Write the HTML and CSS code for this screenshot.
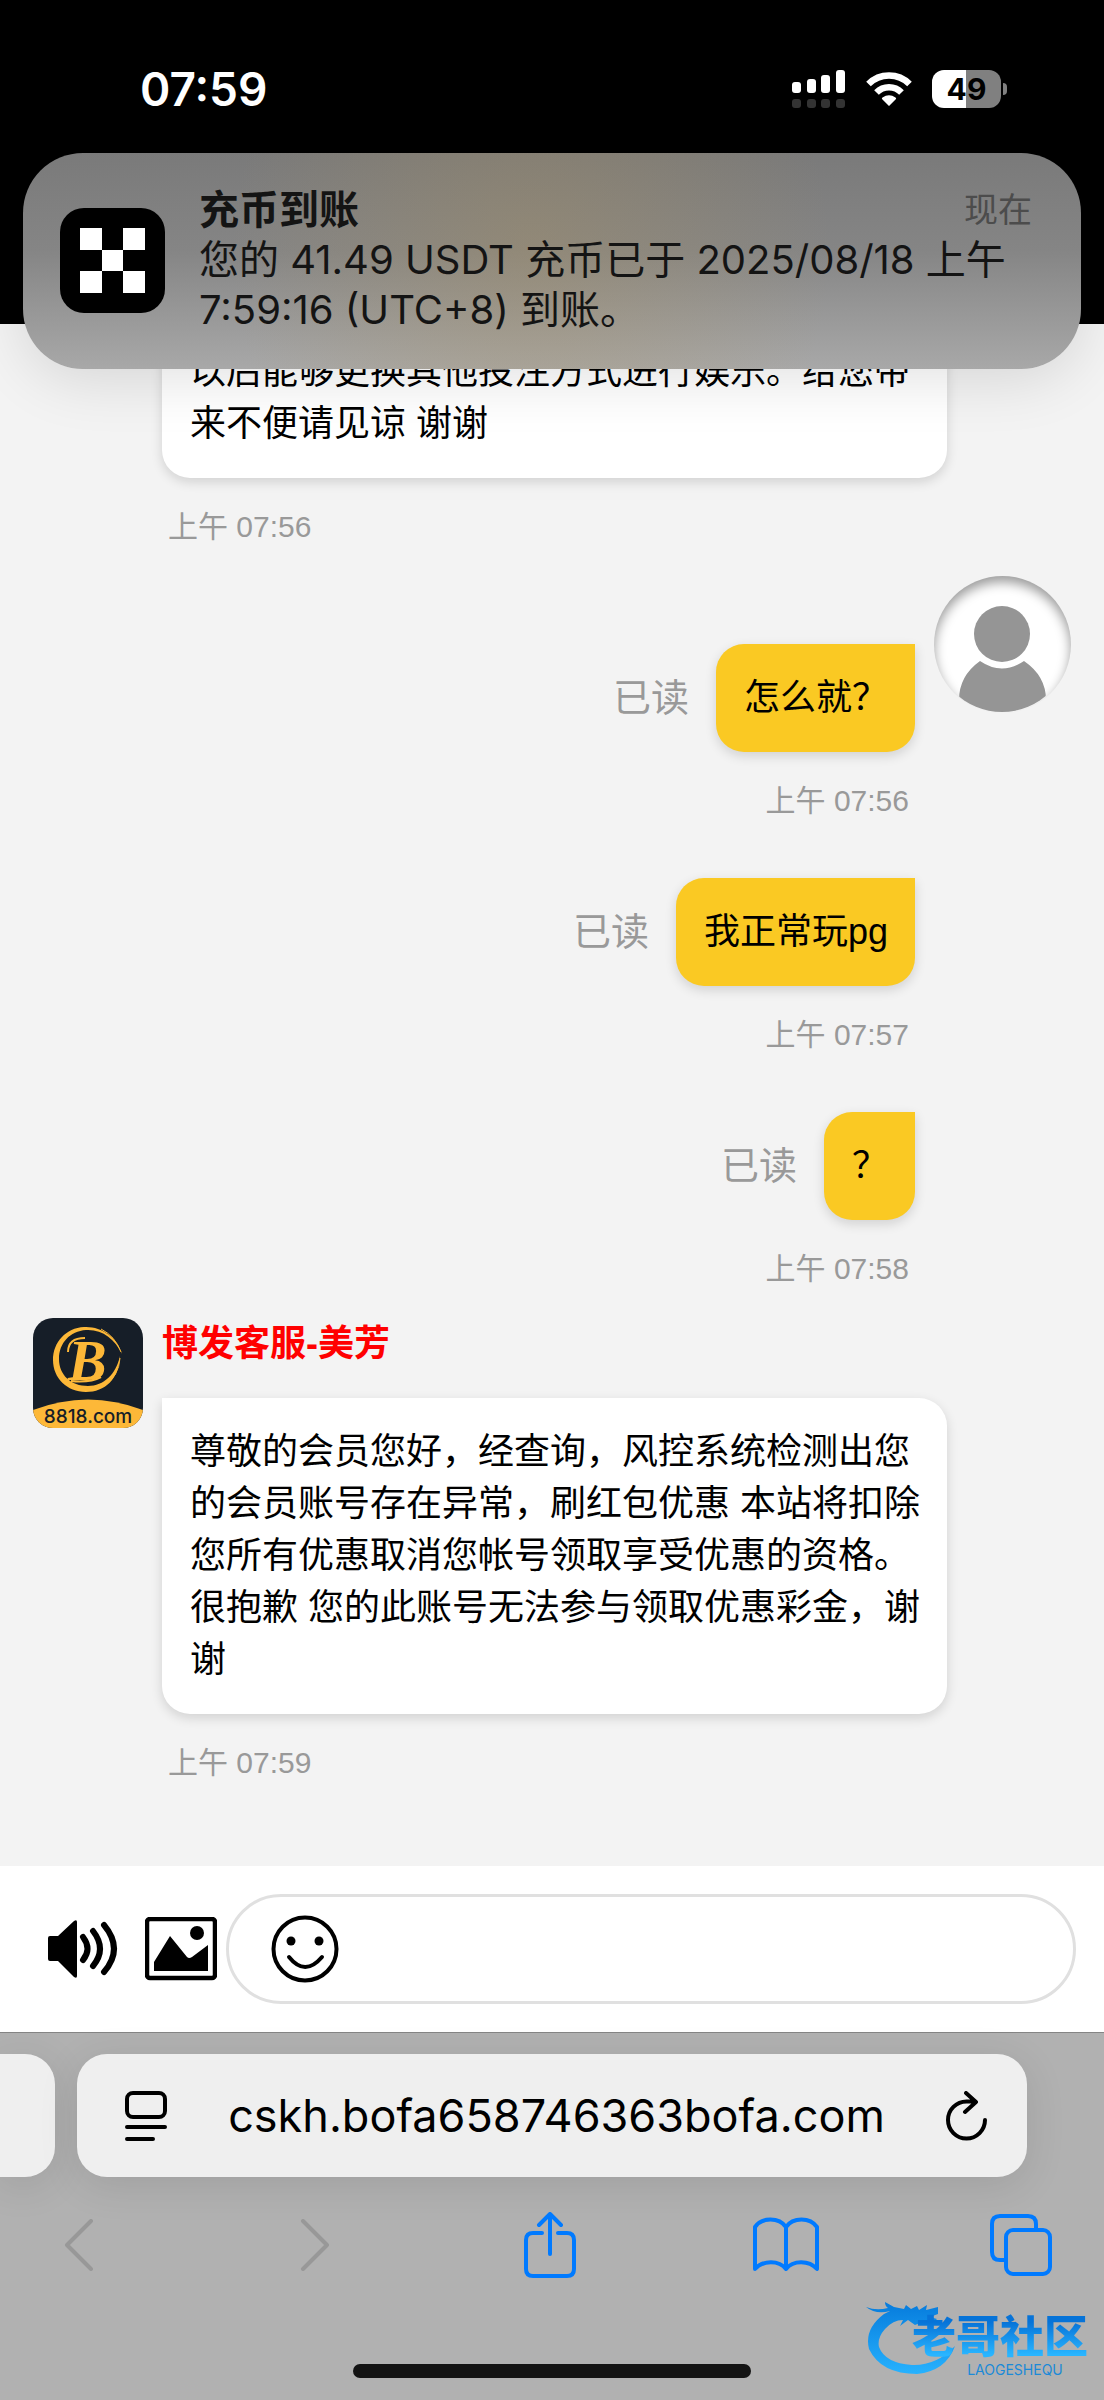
FILE: index.html
```html
<!DOCTYPE html>
<html lang="zh-CN">
<head>
    <meta charset="UTF-8">
    <meta name="viewport" content="width=device-width, initial-scale=1.0">
    <title>在线客服</title>
    <link rel="stylesheet" href="styles.css">
</head>
<body>
<div class="screen">

    <header class="status-bar">
        <span class="clock">07:59</span>
        <div class="status-icons">
            <svg width="54" height="38" viewBox="0 0 54 38" aria-hidden="true">
                <g fill="#fff">
                    <rect x="0" y="12" width="9" height="11" rx="3"/>
                    <rect x="15" y="9" width="9" height="14" rx="3"/>
                    <rect x="29" y="5" width="9" height="18" rx="3"/>
                    <rect x="44" y="0" width="9" height="23" rx="3"/>
                </g>
                <g fill="#333">
                    <rect x="0" y="29" width="9" height="9" rx="3"/>
                    <rect x="15" y="29" width="9" height="9" rx="3"/>
                    <rect x="29" y="29" width="9" height="9" rx="3"/>
                    <rect x="44" y="29" width="9" height="9" rx="3"/>
                </g>
            </svg>
            <svg width="46" height="36" viewBox="0 0 46 36" aria-hidden="true">
                <g fill="none" stroke="#fff" stroke-width="6.5">
                    <path d="M2.5 13A29 29 0 0 1 43.500 13"/>
                    <path d="M10.500 21.500A17.500 17.500 0 0 1 35.500 21.500"/>
                </g>
                <path d="M23 35L16 28Q15.500 27 16.500 26.500Q23 22 29.500 26.500Q30.500 27 30 28Z" fill="#fff"/>
            </svg>
            <div class="battery">49</div>
        </div>
    </header>

    <main class="chat">
        <article class="message theirs">
            <div class="message-body">
                <p class="bubble">以后能够更换其他投注方式进行娱乐。给您带来不便请见谅 谢谢</p>
                <time class="time">上午 07:56</time>
            </div>
        </article>

        <article class="message mine first">
            <div class="message-body">
                <div class="bubble-row">
                    <span class="read">已读</span>
                    <p class="bubble">怎么就？</p>
                </div>
                <time class="time">上午 07:56</time>
            </div>
            <svg class="user-avatar" viewBox="0 0 137 137" role="img" aria-label="用户">
                <defs>
                    <clipPath id="face"><circle cx="68" cy="68" r="68"/></clipPath>
                </defs>
                <g fill="#959595" clip-path="url(#face)">
                    <circle cx="68" cy="58" r="28"/>
                    <path d="M46 85Q68 100 90 85Q112 100 112 124V137H25V124Q25 100 46 85Z"/>
                </g>
            </svg>
        </article>

        <article class="message mine">
            <div class="message-body">
                <div class="bubble-row">
                    <span class="read">已读</span>
                    <p class="bubble">我正常玩pg</p>
                </div>
                <time class="time">上午 07:57</time>
            </div>
        </article>

        <article class="message mine">
            <div class="message-body">
                <div class="bubble-row">
                    <span class="read">已读</span>
                    <p class="bubble">？</p>
                </div>
                <time class="time">上午 07:58</time>
            </div>
        </article>

        <article class="message theirs">
            <svg class="agent-avatar" viewBox="0 0 110 110" role="img" aria-label="8818.com">
                <rect width="110" height="110" fill="#161e28"/>
                <path d="M0 92Q55 71 110 92V110H0Z" fill="#fdb838"/>
                <path d="M89 36C84 19 68 8 51 9C33 10 20 24 20 42C20 60 34 74 53 74C72 74 86 61 87 38C83 56 71 68 55 68C38 68 26 57 26 41C26 25 37 13 53 12C69 11 82 21 89 36Z" fill="#fdb838"/>
                <path d="M68 11Q82 18 88 34M87 40Q86 58 71 68" fill="none" stroke="#fdb838"/>
                <text class="logo-letter" x="35" y="62">B</text>
                <path d="M38 63Q57 65 68 59M35 34Q35 20 52 20" fill="none" stroke="#fdb838" stroke-width="2"/>
                <text class="logo-name" x="55" y="105">8818.com</text>
            </svg>
            <div class="message-body">
                <h2 class="agent-name">博发客服-美芳</h2>
                <p class="bubble">尊敬的会员您好，经查询，风控系统检测出您的会员账号存在异常，刷红包优惠 本站将扣除您所有优惠取消您帐号领取享受优惠的资格。很抱歉 您的此账号无法参与领取优惠彩金，谢谢</p>
                <time class="time">上午 07:59</time>
            </div>
        </article>
    </main>

    <form class="composer">
        <button type="button" class="icon-button sound" aria-label="声音">
            <svg width="70" height="58" viewBox="0 0 70 58">
                <path d="M0 18Q0 16 2 16H10L26 1Q29 -1 29 2V56Q29 59 26 57L10 41H2Q0 41 0 39Z"/>
                <g fill="none" stroke="#000" stroke-width="6" stroke-linecap="round">
                    <path d="M35 17Q44 29 35 40"/>
                    <path d="M45 11Q59 29 45 46"/>
                    <path d="M56 5Q76 29 56 52"/>
                </g>
            </svg>
        </button>
        <button type="button" class="icon-button" aria-label="图片">
            <svg width="72" height="64" viewBox="0 0 72 64">
                <rect x="2" y="2" width="68" height="59" rx="3" fill="none" stroke="#000" stroke-width="4.500"/>
                <circle cx="52" cy="16" r="7"/>
                <path d="M9 54V45L25 19L42 40Q44 42 47 40L63 28V54Z"/>
            </svg>
        </button>
        <div class="input-pill">
            <button type="button" class="icon-button" aria-label="表情">
                <svg width="68" height="68" viewBox="0 0 68 68">
                    <g fill="none" stroke="#000" stroke-width="4" stroke-linecap="round">
                        <circle cx="34" cy="34" r="31.500"/>
                        <path d="M18 42Q34 62 51 42"/>
                    </g>
                    <circle cx="20" cy="26" r="4.500"/>
                    <circle cx="48" cy="26" r="4.500"/>
                </svg>
            </button>
            <input type="text" class="message-input" aria-label="输入消息">
        </div>
    </form>

    <footer class="browser">
        <div class="tabs">
            <div class="previous-tab"></div>
            <div class="address-bar">
                <button type="button" class="icon-button" aria-label="页面设置">
                    <svg width="42" height="50" viewBox="0 0 42 50" fill="none" stroke="#000" stroke-width="4" stroke-linecap="round">
                        <rect x="2" y="2" width="38" height="24" rx="6"/>
                        <path d="M2 36H40M2 48H28"/>
                    </svg>
                </button>
                <a class="address" href="#">cskh.bofa658746363bofa.com</a>
                <button type="button" class="icon-button" aria-label="刷新">
                    <svg width="42" height="50" viewBox="0 0 42 50" fill="none" stroke="#000" stroke-width="4" stroke-linecap="round" stroke-linejoin="round">
                        <path d="M39 29A18.500 18.500 0 1 1 20.500 10.500H29M20 2L30 11L19 21"/>
                    </svg>
                </button>
            </div>
        </div>

        <nav class="toolbar">
            <button type="button" class="icon-button" aria-label="后退" disabled>
                <svg width="30" height="52" viewBox="0 0 30 52"><path d="M27 2L3 26L27 50"/></svg>
            </button>
            <button type="button" class="icon-button" aria-label="前进" disabled>
                <svg width="30" height="52" viewBox="0 0 30 52"><path d="M3 2L27 26L3 50"/></svg>
            </button>
            <button type="button" class="icon-button" aria-label="分享">
                <svg width="52" height="66" viewBox="0 0 52 66"><path d="M18 21H9Q2 21 2 28V57Q2 64 9 64H43Q50 64 50 57V28Q50 21 43 21H34M26 42V3M15 13L26 2L37 13"/></svg>
            </button>
            <button type="button" class="icon-button" aria-label="书签">
                <svg width="66" height="56" viewBox="0 0 66 56"><path d="M33 10C26 0 9 0 2 10V52C10 43 26 43 33 52C40 43 56 43 64 52V10C57 0 40 0 33 10V52"/></svg>
            </button>
            <button type="button" class="icon-button" aria-label="标签页">
                <svg width="62" height="62" viewBox="0 0 62 62"><path d="M14 46H10Q2 46 2 38V10Q2 2 10 2H38Q46 2 46 10V14"/><rect x="16" y="16" width="44" height="44" rx="7"/></svg>
            </button>
        </nav>

        <div class="home-indicator"></div>

        <div class="watermark">
            <svg class="dragon" viewBox="0 0 92 78" aria-hidden="true">
                <defs>
                    <linearGradient id="blue" x1="0" y1="0" x2="0" y2="1">
                        <stop offset="0" stop-color="#067bdc"/>
                        <stop offset="1" stop-color="#27b2fe"/>
                    </linearGradient>
                </defs>
                <path fill="url(#blue)" d="M0 7Q10 11 22 8Q19 6 19 2L28 7L38 9L40 5L45 9L51 6L53 10L61 5L60 10L72 7V14L64 17L71 19L68 22L59 21L49 25L42 20L34 26L37 20Q27 20 19 29Q11 38 13 47Q19 63 46 65Q70 66 89 46Q80 71 51 74Q15 74 3 49Q-2 29 18 14L24 11Q10 15 0 7Z"/>
            </svg>
            <div class="watermark-text">
                <strong>老哥社区</strong>
                <small>LAOGESHEQU</small>
            </div>
        </div>
    </footer>

    <aside class="notification">
        <svg class="app-icon" viewBox="0 0 105 105" role="img" aria-label="OKX">
            <rect width="105" height="105" fill="#000"/>
            <path fill="#fff" d="M20 20H42V42H20ZM63 20H85V42H63ZM42 42H63V63H42ZM20 63H42V85H20ZM63 63H85V85H63Z"/>
        </svg>
        <div class="notification-content">
            <div class="notification-head">
                <h1>充币到账</h1>
                <time>现在</time>
            </div>
            <p>您的 41.49 USDT 充币已于 2025/08/18 上午 7:59:16 (UTC+8) 到账。</p>
        </div>
    </aside>

</div>
</body>
</html>
```

FILE: styles.css
```css
* {
    box-sizing: border-box;
}

body {
    margin: 0;
    background-color: #f3f3f3;
    color: #000;
    font-family: "Liberation Sans", "Noto Sans CJK SC", sans-serif;
}

h1, h2, p {
    margin: 0;
}

.screen {
    position: relative;
    display: flex;
    flex-direction: column;
    height: 100vh;
    overflow: hidden;
}

.icon-button {
    display: flex;
    flex: none;
    padding: 0;
    border: none;
    background: none;
}

/* Status bar */
.status-bar {
    display: flex;
    flex: none;
    justify-content: space-between;
    align-items: flex-start;
    padding: 64px 97px 210px 140px;
    background-color: #000;
    color: #fff;
    font-family: Inter, sans-serif;
}

.clock {
    font-size: 46px;
    font-weight: 600;
    line-height: 50px;
}

.status-icons {
    display: flex;
    align-items: center;
    gap: 20px;
    height: 50px;
}

.battery {
    position: relative;
    width: 69px;
    margin-right: 6px;
    border-radius: 12px;
    background: linear-gradient(to right, #fff 49%, #808080 49%);
    color: #000;
    font-size: 30px;
    font-weight: 700;
    line-height: 38px;
    text-align: center;
}

.battery::after {
    content: "";
    position: absolute;
    top: 13px;
    right: -6px;
    width: 4px;
    height: 12px;
    border-radius: 0 6px 6px 0;
    background-color: #808080;
}

/* Notification over the page */
.notification {
    position: absolute;
    top: 153px;
    left: 23px;
    right: 23px;
    display: flex;
    align-items: center;
    gap: 34px;
    padding: 32px 49px 34px 37px;
    border-radius: 60px;
    background:
        radial-gradient(ellipse 300px 320px at 48% 45%, rgba(170, 145, 95, 0.35), transparent),
        linear-gradient(#7a7a7a, #858585 45%, #a8a8a8);
    box-shadow: 0 10px 60px rgba(0, 0, 0, 0.12);
    color: #141414;
    font-family: Inter, "Noto Sans CJK SC", sans-serif;
}

.app-icon {
    flex: none;
    width: 105px;
    border-radius: 24px;
}

.notification-content {
    flex: 1;
    font-size: 40px;
    line-height: 50px;
}

.notification-head {
    display: flex;
    justify-content: space-between;
}

.notification h1 {
    font-size: 40px;
    font-weight: 600;
}

.notification time {
    color: #4c4c4c;
    font-size: 34px;
}

/* Chat, kept at its newest message */
.chat {
    display: flex;
    flex: 1;
    flex-direction: column;
    justify-content: flex-end;
    gap: 28px;
    min-height: 0;
    padding: 0 33px 82px;
    overflow: hidden;
}

.message {
    display: flex;
    flex: none;
    align-items: flex-start;
    gap: 19px;
}

.message-body {
    display: flex;
    flex-direction: column;
    gap: 28px;
}

.theirs .message-body {
    width: 785px;
}

.theirs .message-body:first-child {
    margin-left: 129px;
}

.mine {
    justify-content: flex-end;
}

.mine .message-body {
    align-items: flex-end;
    margin-top: 28px;
    margin-right: 156px;
}

.first .message-body {
    margin-top: 68px;
    margin-right: 0;
}

.bubble-row {
    display: flex;
    align-items: center;
    gap: 27px;
}

.bubble {
    padding: 28px 24px 28px 28px;
    border-radius: 0 28px 28px 28px;
    background-color: #fff;
    box-shadow: 0 4px 12px rgba(0, 0, 0, 0.14);
    font-size: 36px;
    line-height: 52px;
}

.mine .bubble {
    padding-right: 27px;
    border-radius: 28px 0 28px 28px;
    background-color: #fac923;
}

.read {
    color: #999;
    font-size: 38px;
    line-height: 52px;
}

.time {
    padding: 0 6px;
    color: #999;
    font-size: 30px;
    line-height: 42px;
}

.agent-name {
    color: #f00;
    font-size: 36px;
    font-weight: 700;
    line-height: 52px;
}

.agent-avatar {
    flex: none;
    width: 110px;
    border-radius: 20px;
}

.logo-letter {
    fill: #fdb838;
    font: italic bold 58px "Liberation Serif", serif;
}

.logo-name {
    fill: #161e28;
    font: 500 19px Inter, sans-serif;
    text-anchor: middle;
}

.user-avatar {
    flex: none;
    width: 137px;
    border-radius: 50%;
    background-color: #fff;
    box-shadow: inset 0 6px 12px rgba(0, 0, 0, 0.4);
}

/* Message composer */
.composer {
    display: flex;
    flex: none;
    align-items: center;
    padding: 28px 28px 28px 48px;
    background-color: #fff;
}

.sound {
    margin-right: 27px;
}

.input-pill {
    display: flex;
    flex: 1;
    align-items: center;
    gap: 20px;
    margin-left: 9px;
    padding: 18px 42px;
    border: 3px solid #e0e0e0;
    border-radius: 56px;
}

.message-input {
    flex: 1;
    min-width: 0;
    border: none;
    outline: none;
    background: none;
    font-size: 36px;
}

/* Browser controls */
.browser {
    position: relative;
    flex: none;
    padding-bottom: 22px;
    border-top: 1px solid #858585;
    background-color: #b1b1b1;
}

.tabs {
    display: flex;
    gap: 22px;
    padding: 21px 77px 0 0;
}

.previous-tab {
    width: 55px;
    border-radius: 0 30px 30px 0;
    background-color: #efefef;
    box-shadow: 0 8px 40px rgba(0, 0, 0, 0.1);
}

.address-bar {
    display: flex;
    flex: 1;
    justify-content: space-between;
    align-items: center;
    height: 123px;
    padding: 0 39px 0 48px;
    border-radius: 30px;
    background-color: #efefef;
    box-shadow: 0 8px 40px rgba(0, 0, 0, 0.1);
}

.address {
    color: #000;
    font-family: Inter, sans-serif;
    font-size: 45px;
    text-decoration: none;
}

.toolbar {
    display: flex;
    justify-content: space-between;
    padding: 35px 50px 0 46px;
}

.toolbar .icon-button {
    justify-content: center;
    align-items: center;
    width: 66px;
    height: 66px;
}

.toolbar svg {
    fill: none;
    stroke: #007aff;
    stroke-width: 4;
    stroke-linecap: round;
    stroke-linejoin: round;
}

.toolbar .icon-button:disabled svg {
    stroke: #989898;
}

.home-indicator {
    width: 36%;
    height: 14px;
    margin: 86px auto 0;
    border-radius: 7px;
    background-color: #141414;
}

.watermark {
    position: absolute;
    right: 16px;
    bottom: 22px;
    display: flex;
    align-items: flex-end;
}

.dragon {
    width: 92px;
    height: 78px;
}

.watermark-text {
    display: flex;
    flex-direction: column;
    margin-left: -46px;
    font-family: Inter, "Noto Sans CJK SC", sans-serif;
}

.watermark-text strong {
    background: linear-gradient(#0673d8 20%, #29b5ff 85%);
    background-clip: text;
    color: transparent;
    font-size: 44px;
    font-weight: 900;
    line-height: 50px;
}

.watermark-text small {
    align-self: center;
    padding-left: 30px;
    color: #1b8ad8;
    font-size: 14px;
    line-height: 16px;
}
```
